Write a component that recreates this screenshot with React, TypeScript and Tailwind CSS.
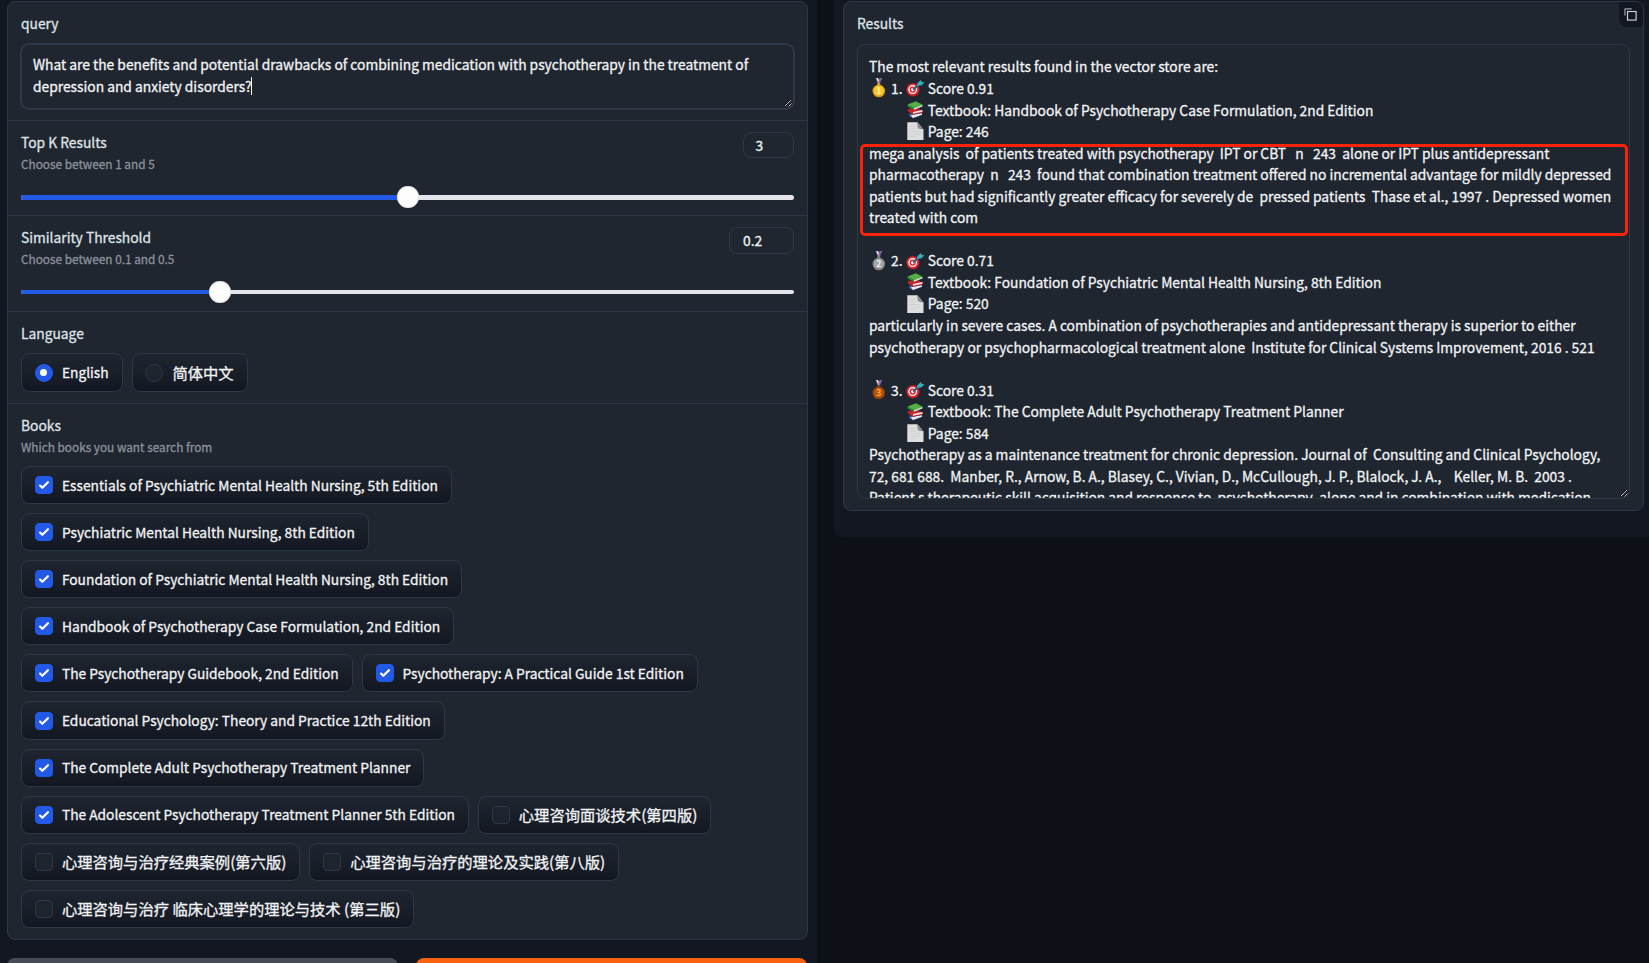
import type { ReactNode } from "react";

const BOOK_ROWS: { label: string; checked: boolean }[][] = [
  [{ label: "Essentials of Psychiatric Mental Health Nursing, 5th Edition", checked: true }],
  [{ label: "Psychiatric Mental Health Nursing, 8th Edition", checked: true }],
  [{ label: "Foundation of Psychiatric Mental Health Nursing, 8th Edition", checked: true }],
  [{ label: "Handbook of Psychotherapy Case Formulation, 2nd Edition", checked: true }],
  [
    { label: "The Psychotherapy Guidebook, 2nd Edition", checked: true },
    { label: "Psychotherapy: A Practical Guide 1st Edition", checked: true },
  ],
  [{ label: "Educational Psychology: Theory and Practice 12th Edition", checked: true }],
  [{ label: "The Complete Adult Psychotherapy Treatment Planner", checked: true }],
  [
    { label: "The Adolescent Psychotherapy Treatment Planner 5th Edition", checked: true },
    { label: "心理咨询面谈技术(第四版)", checked: false },
  ],
  [
    { label: "心理咨询与治疗经典案例(第六版)", checked: false },
    { label: "心理咨询与治疗的理论及实践(第八版)", checked: false },
  ],
  [{ label: "心理咨询与治疗 临床心理学的理论与技术 (第三版)", checked: false }],
];

const RESULTS = [
  {
    rank: 1,
    score: "0.91",
    book: "Handbook of Psychotherapy Case Formulation, 2nd Edition",
    page: 246,
    lines: [
      "mega analysis  of patients treated with psychotherapy  IPT or CBT   n   243  alone or IPT plus antidepressant",
      "pharmacotherapy  n   243  found that combination treatment offered no incremental advantage for mildly depressed",
      "patients but had significantly greater efficacy for severely de  pressed patients  Thase et al., 1997 . Depressed women",
      "treated with com",
    ],
  },
  {
    rank: 2,
    score: "0.71",
    book: "Foundation of Psychiatric Mental Health Nursing, 8th Edition",
    page: 520,
    lines: [
      "particularly in severe cases. A combination of psychotherapies and antidepressant therapy is superior to either",
      "psychotherapy or psychopharmacological treatment alone  Institute for Clinical Systems Improvement, 2016 . 521",
    ],
  },
  {
    rank: 3,
    score: "0.31",
    book: "The Complete Adult Psychotherapy Treatment Planner",
    page: 584,
    lines: [
      "Psychotherapy as a maintenance treatment for chronic depression. Journal of  Consulting and Clinical Psychology,",
      "72, 681 688.  Manber, R., Arnow, B. A., Blasey, C., Vivian, D., McCullough, J. P., Blalock, J. A.,    Keller, M. B.  2003 .",
      "Patient s therapeutic skill acquisition and response to  psychotherapy, alone and in combination with medication.",
    ],
  },
];

const MEDALS: Record<number, { outer: string; inner: string; text: string }> = {
  1: { outer: "#d99a10", inner: "#fbc52d", text: "#fff3b8" },
  2: { outer: "#7d7f82", inner: "#a3a5a8", text: "#f1f1f1" },
  3: { outer: "#8a3d0c", inner: "#b4560f", text: "#ffa83c" },
};

function Medal({ rank }: { rank: number }) {
  const c = MEDALS[rank];
  return (
    <svg width="19" height="20" viewBox="-0.8 0 19 20" className="shrink-0">
      <path d="M5.500 0h2.300l2.700 6H8.200z" fill="#4677c4" />
      <path d="M12.500 0h-2.300l-2.700 6h2.300z" fill="#4677c4" />
      <path d="M6.700 0h1.500l1.300 3.500-1 1.500z" fill="#f2f2f2" />
      <path d="M11.300 0H9.900L8.600 3.500l.8 1.500z" fill="#e5484d" />
      <rect x="7.400" y="5" width="3.200" height="2.500" rx="1" fill={c.outer} />
      <circle cx="9" cy="13" r="6.300" fill={c.outer} />
      <circle cx="9" cy="12.700" r="5.100" fill={c.inner} />
      <text x="9" y="15.900" textAnchor="middle" fontSize="8.500" fontWeight="700" fill={c.text}>
        {rank}
      </text>
    </svg>
  );
}

function Target() {
  return (
    <svg width="19" height="18" viewBox="0 0 19 18" className="shrink-0">
      <ellipse cx="7" cy="10.800" rx="6.700" ry="6.700" fill="#b5121f" />
      <ellipse cx="6.700" cy="10.600" rx="6" ry="6" fill="#e0303a" />
      <ellipse cx="6.700" cy="10.600" rx="4.400" ry="4.500" fill="#f7f2f2" />
      <ellipse cx="6.700" cy="10.600" rx="3.100" ry="3.200" fill="#d4232e" />
      <ellipse cx="6.700" cy="10.600" rx="1.700" ry="1.800" fill="#f7f2f2" />
      <path d="M7 10.500L14 4.800" stroke="#2a5f78" strokeWidth="1.900" />
      <path d="M10.800 6.800L11.500 4 15 1 15.800 2.900 18.600 3.300 15.200 6.600z" fill="#35aebb" />
    </svg>
  );
}

function Books() {
  return (
    <svg width="17" height="18" viewBox="0 0 17 17" preserveAspectRatio="none" className="shrink-0">
      <path d="M2 12l10-1.500 3.500 2.500-9.500 3.500-4-2z" fill="#31539a" />
      <path d="M3.500 13.500l11.500-2v1.500l-9 3z" fill="#e9e9ec" />
      <path d="M1 7.500l10-1 4.500 3v1.500L6 13 1.200 10z" fill="#c9202b" />
      <path d="M6 10.500l9.500-2v1.700L6 12z" fill="#efe6e4" />
      <path d="M.6 3.300L9 .3l6.600 3.200v1.200L7 8.200.6 5.200z" fill="#2f8a34" />
      <path d="M.8 3.300L9 .4l6.400 3.100L7 6.400z" fill="#55ad45" />
      <path d="M7 6.700l8.400-2.900v1.500L7 8.200z" fill="#d8ded4" />
    </svg>
  );
}

function PageIcon() {
  return (
    <svg width="17" height="18" viewBox="0 0 17 18" className="shrink-0">
      <path d="M.3.200h10.200l6 7.300V18H.3z" fill="#dedede" />
      <path d="M10.500.200l6 7.300-5.600-1.500z" fill="#4b4d50" />
      <path d="M10.500.200c1 2 1 4 .2 6.300 2-.5 4-.1 5.800 1z" fill="#8f9193" />
      <path d="M2.500 4.500h6M2.500 7h6M2.500 9.500h11M2.500 12h11M2.500 14.500h5" stroke="#cbcbcb" strokeWidth=".7" />
    </svg>
  );
}

function ResizeGrip() {
  return (
    <svg width="8" height="8" viewBox="0 0 8 8" className="absolute right-[1px] bottom-[1px]">
      <path d="M1 7L7 1M4.500 7.500L7.500 4.500" stroke="#000" strokeWidth="1" transform="translate(-.5 -.5)" />
      <path d="M1 7L7 1M4.500 7.500L7.500 4.500" stroke="#d5d7da" strokeWidth=".9" />
    </svg>
  );
}

function Line({ children }: { children?: ReactNode }) {
  return <div className="flex h-[21.56px] items-center whitespace-pre">{children}</div>;
}

function Label({ children }: { children: ReactNode }) {
  return <div className="h-[22px] text-[13.8px] leading-[21px] text-[#dfe2e6]">{children}</div>;
}

function Info({ children }: { children: ReactNode }) {
  return <div className="h-[20px] text-[11.8px] leading-[20px] text-[#8b919b]">{children}</div>;
}

function Option({ label, checked, round = false }: { label: string; checked: boolean; round?: boolean }) {
  const cjk = /[\u4e00-\u9fff]/.test(label);
  return (
    <div className="flex h-full items-center gap-[9px] rounded-[8px] border border-[#2c3843] bg-linear-to-b from-[#1f2630] to-[#131722] px-[12.900px] whitespace-pre">
      <span
        className={`flex size-[18px] shrink-0 items-center justify-center border ${round ? "rounded-full" : "rounded-[4px]"} ${
          checked ? "border-[#2259e6] bg-[#2259e6]" : "border-[#2c3843] bg-[#1d242e]"
        }`}
      >
        {checked && round && <span className="size-[7px] rounded-full bg-white" />}
        {checked && !round && (
          <svg width="18" height="18" viewBox="0 0 16 16" fill="#fff" className="shrink-0">
            <path d="M12.207 4.793a1 1 0 0 1 0 1.414l-5 5a1 1 0 0 1-1.414 0l-2-2a1 1 0 0 1 1.414-1.414L6.500 9.086l4.293-4.293a1 1 0 0 1 1.414 0z" />
          </svg>
        )}
      </span>
      <span className={cjk ? "text-[15.3px]" : "text-[13.78px]"}>{label}</span>
    </div>
  );
}

function SliderTrack({ percent, thick }: { percent: number; thick: boolean }) {
  return (
    <div className="relative flex h-[22px] items-center">
      <div className={`w-full overflow-hidden rounded-full bg-[#e2e4e9] ${thick ? "h-[5px]" : "h-[4px]"}`}>
        <div className="h-full bg-[#2259e6]" style={{ width: `${percent}%` }} />
      </div>
      <div
        className="absolute top-0 size-[22px] -translate-x-1/2 rounded-full bg-[#fdfdfd] shadow-[inset_0_0_2px_#bbb]"
        style={{ left: `${percent}%` }}
      />
    </div>
  );
}

export default function App() {
  return (
    <div className="flex h-[963px] w-[1649px] items-start gap-[17px] overflow-hidden bg-[#0d1017] font-['Noto_Sans_CJK_SC',sans-serif] text-[13.8px] font-normal text-[#f2f3f5] [-webkit-text-stroke:0.3px]">
      <div className="flex h-full w-[817px] shrink-0 flex-col bg-[#131722] pt-[1px] pl-[7px]">
        <div className="flex h-[939px] w-[801px] shrink-0 flex-col rounded-[8px] border border-[#2c3843] bg-[#1f2630]">
          <section className="h-[119px] border-b border-[#2c3843] pt-[11px] pr-[11px] pl-[12px]">
            <div className="pl-[1px]">
              <Label>query</Label>
            </div>
            <div className="relative mt-[8px] h-[67px] w-[775px] rounded-[9px] border-2 border-[#2e3948] pt-[9px] pl-[11px]">
              <Line>What are the benefits and potential drawbacks of combining medication with psychotherapy in the treatment of</Line>
              <Line>
                depression and anxiety disorders?<span className="-ml-px h-[18px] w-px bg-white" />
              </Line>
              <ResizeGrip />
            </div>
          </section>

          <section className="h-[95px] border-b border-[#2c3843] px-[13px] pt-[11px]">
            <div className="flex h-[54px] items-start justify-between">
              <div>
                <Label>Top K Results</Label>
                <Info>Choose between 1 and 5</Info>
              </div>
              <div className="flex h-[26px] w-[51px] items-center rounded-[8px] border border-[#2c3843] pl-[11.500px]">3</div>
            </div>
            <SliderTrack percent={50} thick />
          </section>

          <section className="h-[96px] border-b border-[#2c3843] px-[13px] pt-[11px]">
            <div className="flex h-[54px] items-start justify-between">
              <div>
                <Label>Similarity Threshold</Label>
                <Info>Choose between 0.1 and 0.5</Info>
              </div>
              <div className="flex h-[27px] w-[65px] items-center rounded-[8px] border border-[#2c3843] pl-[13px]">0.2</div>
            </div>
            <SliderTrack percent={25.7} thick={false} />
          </section>

          <section className="h-[92px] border-b border-[#2c3843] px-[13px] pt-[11px]">
            <Label>Language</Label>
            <div className="mt-[8px] flex h-[39px] gap-[9px]">
              <Option label="English" checked round />
              <Option label="简体中文" checked={false} round />
            </div>
          </section>

          <section className="px-[13px] pt-[11px]">
            <Label>Books</Label>
            <Info>Which books you want search from</Info>
            <div className="mt-[9px] flex flex-col gap-[9px]">
              {BOOK_ROWS.map((row) => (
                <div key={row[0].label} className="flex h-[38.1px] gap-[9px]">
                  {row.map((book) => (
                    <Option key={book.label} {...book} />
                  ))}
                </div>
              ))}
            </div>
          </section>
        </div>

        <div className="mt-[18px] flex gap-[18px]">
          <div className="h-[46px] w-[391px] rounded-[8px] bg-linear-to-b from-[#474c57] to-[#3a404b]" />
          <div className="h-[46px] w-[391px] rounded-[8px] bg-[#f9600f]" />
        </div>
      </div>

      <div className="h-[537px] flex-1 rounded-bl-[9px] bg-[#131722] pt-[1px] pl-[9px]">
        <div className="relative h-[510px] w-[801px] rounded-[8px] border border-[#2c3843] bg-[#1f2630] pt-[11px] pl-[13px]">
          <Label>Results</Label>
          <div className="relative mt-[9px] h-[455px] w-[773px] overflow-hidden rounded-[8px] border border-[#2c3843] pt-[11px] pl-[11px]">
            <Line>The most relevant results found in the vector store are:</Line>
            {RESULTS.map((r) => (
              <div key={r.rank} className="mb-[21.56px]">
                <Line>
                  <Medal rank={r.rank} />
                  <span className="w-[18px] pl-[3px]">{r.rank}.</span>
                  <Target />
                  <span className="pl-[2.800px]">Score {r.score}</span>
                </Line>
                <div className="pl-[37.500px]">
                  <Line>
                    <Books />
                    <span className="pl-[4.300px]">Textbook: {r.book}</span>
                  </Line>
                  <Line>
                    <PageIcon />
                    <span className="pl-[4.300px]">Page: {r.page}</span>
                  </Line>
                </div>
                {r.lines.map((text) => (
                  <Line key={text}>{text}</Line>
                ))}
              </div>
            ))}
            <ResizeGrip />
          </div>
          <div className="absolute top-[141.500px] left-[16px] h-[92.500px] w-[768px] rounded-[5px] border-[3px] border-[#f9230a]" />
          <div className="absolute top-0 right-0 flex h-[25px] w-[24px] items-center justify-center rounded-tr-[7px] rounded-bl-[8px] bg-[#131722]">
            <svg width="13" height="13" viewBox="0 0 13 13" fill="none" stroke="#c9ccd1" strokeWidth="1.200" className="-translate-x-px">
              <rect x="3.500" y="3.500" width="8.600" height="8.600" />
              <path d="M.900 7.500V1.500q0-.6.600-.6H7.800" stroke="#9a9ea6" />
            </svg>
          </div>
        </div>
      </div>
    </div>
  );
}
